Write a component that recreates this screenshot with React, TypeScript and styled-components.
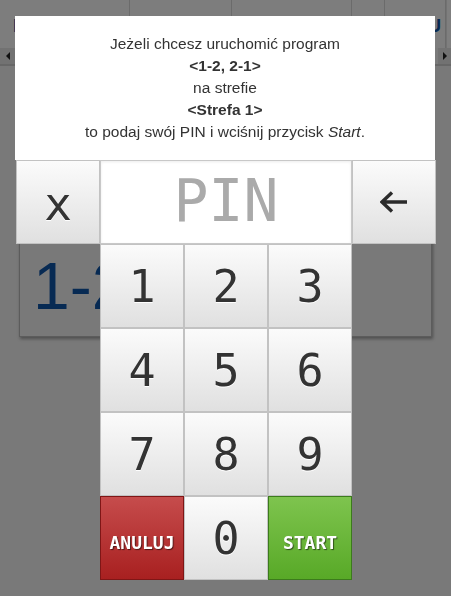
import * as React from 'react'
import styled, { createGlobalStyle, css } from 'styled-components'

const GlobalStyle = createGlobalStyle`
  html, body {
    margin: 0;
    padding: 0;
    width: 100%;
    height: 100%;
    overflow: hidden;
  }
  body {
    font-family: 'Liberation Sans', Arial, sans-serif;
  }
  * {
    box-sizing: border-box;
  }
`

const MONO = `'DejaVu Sans Mono', 'Liberation Mono', monospace`

const Page = styled.div`
  position: relative;
  width: 100%;
  height: 100vh;
  background: #f2f2f2;
  overflow: hidden;
`

const Header = styled.div`
  display: flex;
  height: 48px;
  background: #fbfbfb;
`

const HeaderCell = styled.div<{ $w?: number; $right?: boolean }>`
  display: flex;
  align-items: center;
  justify-content: ${({ $right }) => ($right ? 'flex-end' : 'flex-start')};
  width: ${({ $w }) => ($w ? `${$w}px` : 'auto')};
  flex: ${({ $w }) => ($w ? 'none' : '1')};
  padding: 5px 4px 0 13px;
  border-right: 1px solid #d6d6d6;
  overflow: hidden;
  white-space: nowrap;
`

const HeaderLabel = styled.span`
  font-size: 18px;
  font-weight: bold;
  color: #0f54a7;
`

const HeaderScroll = styled.div`
  width: 5px;
  background: #ffffff;
  border-left: 1px solid #e4e4e4;
`

const ScrollStrip = styled.div`
  display: flex;
  align-items: stretch;
  justify-content: space-between;
  height: 18px;
  background: #f6f6f6;
  border-bottom: 2px solid #cfcfcf;
`

const StripButton = styled.div<{ $w: number }>`
  display: flex;
  align-items: center;
  justify-content: center;
  width: ${({ $w }) => $w}px;
  background: #e4e4e4;
`

const StripArrow = styled.span<{ $dir: 'left' | 'right' }>`
  width: 0;
  height: 0;
  border-top: 4px solid transparent;
  border-bottom: 4px solid transparent;
  ${({ $dir }) =>
    $dir === 'left'
      ? css`border-right: 4px solid #222;`
      : css`border-left: 4px solid #222;`}
`

const Content = styled.div`
  padding: 134px 19px 0 19px;
`

const ProgramCard = styled.div`
  height: 137px;
  padding: 52px 8px 0 13px;
  background: #f2f2f2;
  border: 1px solid #b8b8b8;
  box-shadow: 1px 2px 3px rgba(0, 0, 0, 0.35);
`

const ProgramTitle = styled.div`
  font-size: 66px;
  line-height: 66px;
  color: #0f54a7;
  white-space: nowrap;
`

const Overlay = styled.div`
  position: fixed;
  inset: 0;
  background: rgba(0, 0, 0, 0.5);
`

const Dialog = styled.div`
  position: absolute;
  left: 15px;
  top: 16px;
  width: 421px;
`

const Message = styled.div`
  width: 420px;
  padding: 17px 10px;
  background: #fff;
  color: #333;
  font-size: 15.5px;
  line-height: 22px;
  text-align: center;
`

const Keypad = styled.div`
  display: flex;
  flex-direction: column;
  padding-left: 1px;
`

const TopRow = styled.div`
  display: flex;
`

const KeyBase = css`
  display: flex;
  align-items: center;
  justify-content: center;
  width: 84px;
  height: 84px;
  border: 1px solid #c2c2c2;
  background: linear-gradient(to bottom, #fbfbfb 0%, #e0e0e0 100%);
  color: #333;
  font-family: ${MONO};
  cursor: pointer;
`

const Key = styled.button`
  ${KeyBase};
  padding: 0;
  font-size: 45px;
  line-height: 1;
  text-shadow: 0 1px 0 #fff;
`

const CloseKey = styled(Key)`
  font-size: 46px;
  padding-top: 4px;
`

const ActionKey = styled.button<{ $variant: 'cancel' | 'start' }>`
  ${KeyBase};
  padding: 8px 0 0 0;
  font-size: 18px;
  font-weight: bold;
  color: #fff;
  text-shadow: 1px 1px 1px rgba(0, 0, 0, 0.55);
  ${({ $variant }) =>
    $variant === 'cancel'
      ? css`
          background: linear-gradient(to bottom, #c64c4c 0%, #a82020 100%);
          border-color: #7f1616;
        `
      : css`
          background: linear-gradient(to bottom, #7ec44e 0%, #58a927 100%);
          border-color: #3c7b1c;
        `}
`

const PinField = styled.input`
  width: 252px;
  height: 84px;
  margin: 0;
  padding: 0 0 2px 0;
  border: 1px solid #c8c8c8;
  background: #fff;
  box-shadow: inset 0 1px 3px rgba(0, 0, 0, 0.08);
  font-family: ${MONO};
  font-size: 58px;
  text-align: center;
  color: #333;
  outline: none;
  &::placeholder {
    color: #aaa;
  }
`

const NumberGrid = styled.div`
  display: grid;
  grid-template-columns: repeat(3, 84px);
  grid-auto-rows: 84px;
  margin-left: 84px;
`

const BackArrow = () => (
  <svg width="28" height="22" viewBox="0 0 28 22" fill="none">
    <path
      d="M2 11 H27 M12 1.5 L2 11 L12 20.5"
      stroke="#2b2b2b"
      strokeWidth="3.4"
      strokeLinejoin="miter"
    />
  </svg>
)

const digits = ['1', '2', '3', '4', '5', '6', '7', '8', '9']

export default function App() {
  const [pin, setPin] = React.useState('')

  const press = (d: string) => setPin((p) => (p + d).slice(0, 8))

  return (
    <>
      <GlobalStyle />
      <Page>
        <Header>
          <HeaderCell $w={130}>
            <HeaderLabel>PROGRAMY</HeaderLabel>
          </HeaderCell>
          <HeaderCell $w={102} />
          <HeaderCell $w={120} />
          <HeaderCell $w={33} />
          <HeaderCell $right>
            <HeaderLabel>MENU</HeaderLabel>
          </HeaderCell>
          <HeaderScroll />
        </Header>
        <ScrollStrip>
          <StripButton $w={15}>
            <StripArrow $dir="left" />
          </StripButton>
          <StripButton $w={13}>
            <StripArrow $dir="right" />
          </StripButton>
        </ScrollStrip>
        <Content>
          <ProgramCard>
            <ProgramTitle>1-2, 2-1</ProgramTitle>
          </ProgramCard>
        </Content>
      </Page>
      <Overlay>
        <Dialog>
          <Message>
            Jeżeli chcesz uruchomić program
            <br />
            <b>&lt;1-2, 2-1&gt;</b>
            <br />
            na strefie
            <br />
            <b>&lt;Strefa 1&gt;</b>
            <br />
            to podaj swój PIN i wciśnij przycisk <i>Start</i>.
          </Message>
          <Keypad>
            <TopRow>
              <CloseKey>x</CloseKey>
              <PinField
                type="password"
                placeholder="PIN"
                value={pin}
                readOnly
              />
              <Key onClick={() => setPin((p) => p.slice(0, -1))}>
                <BackArrow />
              </Key>
            </TopRow>
            <NumberGrid>
              {digits.map((d) => (
                <Key key={d} onClick={() => press(d)}>
                  {d}
                </Key>
              ))}
              <ActionKey $variant="cancel" onClick={() => setPin('')}>
                ANULUJ
              </ActionKey>
              <Key onClick={() => press('0')}>0</Key>
              <ActionKey $variant="start">START</ActionKey>
            </NumberGrid>
          </Keypad>
        </Dialog>
      </Overlay>
    </>
  )
}
